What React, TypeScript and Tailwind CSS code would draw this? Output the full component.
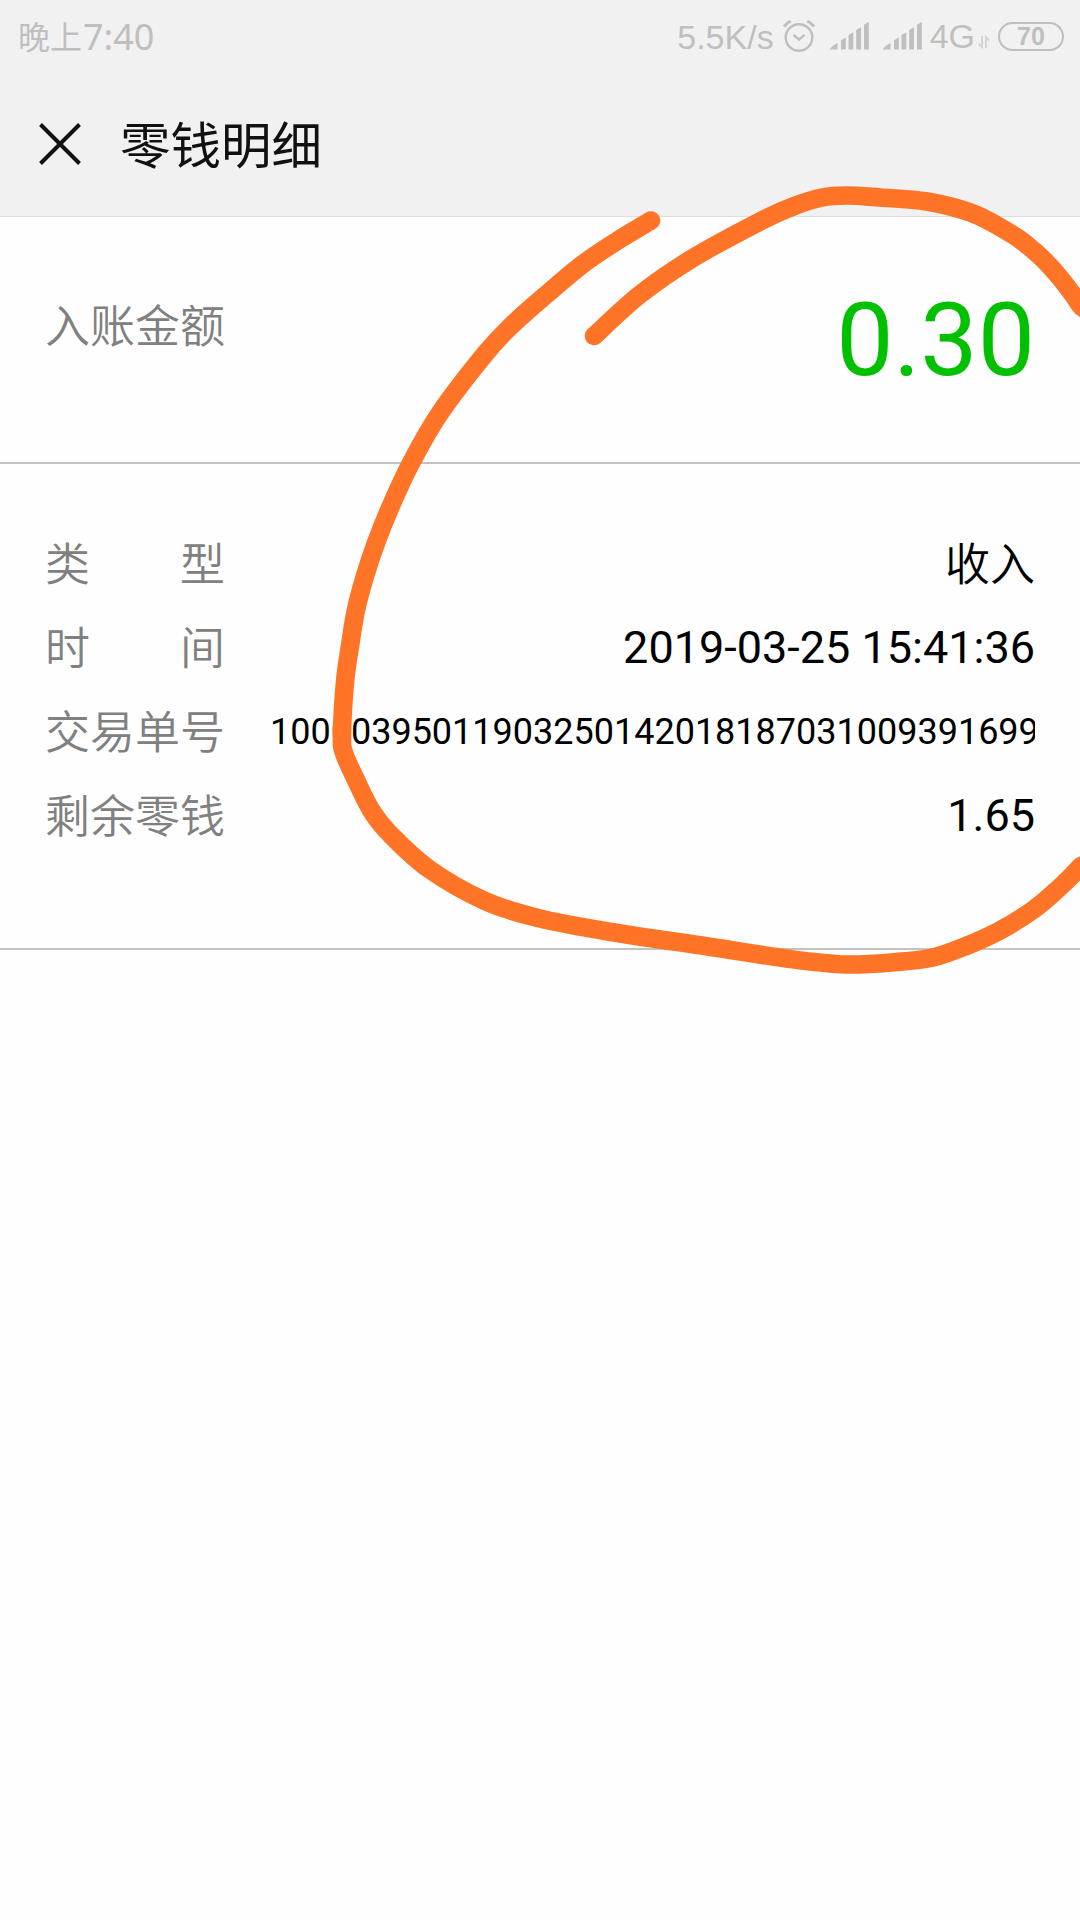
const details = [
  { label: ["类", "型"], value: "收入" },
  { label: ["时", "间"], value: "2019-03-25 15:41:36" },
  { label: ["交", "易", "单", "号"], value: "10000395011903250142018187031009391699", small: true },
  { label: ["剩", "余", "零", "钱"], value: "1.65" },
];

const strokePoints = [
  [594, 336], [640, 294.5], [693, 258], [760, 221.5], [793, 206.5], [822, 197.5], [847, 195.5], [880, 197.5],
  [927, 201.5], [973, 213.5], [1010, 233], [1027, 245], [1044, 260], [1061, 279], [1080, 305], [1100, 340],
  [1140, 560], [1108, 834], [1080, 867], [1058, 889], [1033, 910], [999, 931], [965, 946.5], [933, 957.5],
  [897, 962], [846, 964.5], [790, 959], [708, 946.5], [611, 932], [538, 918], [485, 901], [429, 869],
  [389, 833], [371, 810], [356, 780], [344, 753], [342, 735], [345, 682], [350, 646], [356, 610],
  [365, 576], [376, 543], [390, 508], [411, 463], [440, 413], [485, 354], [512, 325], [547, 294],
  [583, 264], [617, 241], [651, 220.5],
];

// Catmull-Rom spline through the points, written as cubic beziers
function smoothPath(pts: number[][]) {
  let d = `M${pts[0][0]} ${pts[0][1]}`;
  for (let i = 0; i < pts.length - 1; i++) {
    const p0 = pts[i - 1] ?? pts[i];
    const p1 = pts[i];
    const p2 = pts[i + 1];
    const p3 = pts[i + 2] ?? p2;
    d += `C${p1[0] + (p2[0] - p0[0]) / 6} ${p1[1] + (p2[1] - p0[1]) / 6} ${p2[0] - (p3[0] - p1[0]) / 6} ${p2[1] - (p3[1] - p1[1]) / 6} ${p2[0]} ${p2[1]}`;
  }
  return d;
}

function AlarmIcon() {
  return (
    <svg width="34" height="34" viewBox="0 0 34 34" fill="none" stroke="currentColor" strokeWidth="2.4" strokeLinecap="round">
      <circle cx="17" cy="18.5" r="13.3" />
      <path d="M2 7.6Q4.7 3.8 8.8 2M32 7.6Q29.3 3.8 25.2 2" strokeWidth="3" strokeLinecap="butt" />
      <path d="M12.2 16.4L17 20.6L22 16.4" />
    </svg>
  );
}

function SignalIcon() {
  return (
    <svg width="40" height="28" viewBox="0 0 40 28" fill="currentColor">
      <path d="M0 27.5Q0 25 7.5 21V27.5ZM11 18.2L15.8 15.5V27.5H11ZM18.5 13L23.3 10.3V27.5H18.5ZM26.2 8L31 5.2V27.5H26.2ZM34 2.7L38.8 0V27.5H34Z" />
    </svg>
  );
}

function StatusBar() {
  return (
    <div className="flex h-[72px] items-center justify-between pl-[18px] pr-4 text-[#bfbfbf]">
      <div className="flex items-center pt-px leading-none">
        <span className="mb-[3px] font-['Noto_Sans_CJK_SC',sans-serif] text-[32px]">晚上</span>
        <span className="ml-px font-['Noto_Sans',sans-serif] text-[36px]">7:40</span>
      </div>
      <div className="flex items-center font-['Liberation_Sans',sans-serif] text-[34px] leading-none">
        <span className="mr-[8px] mt-px">5.5K/s</span>
        <AlarmIcon />
        <span className="ml-[14px] mr-[13px]"><SignalIcon /></span>
        <SignalIcon />
        <span className="ml-[7px]">4G</span>
        <svg className="ml-[3px] mr-[8px] mt-[12px]" width="12" height="14" viewBox="0 0 12 14" fill="none" stroke="#d2d2d2" strokeWidth="1.8">
          <path d="M4 1V12L0.8 8.5M8 13V2L11.2 5.5" />
        </svg>
        <div className="flex h-[29px] w-[66px] items-center justify-center rounded-full border-[2.5px] border-[#bfbfbf] text-[25px] font-bold">
          70
        </div>
      </div>
    </div>
  );
}

export default function App() {
  return (
    <div className="relative h-[1920px] w-[1080px] overflow-hidden bg-[#fefefe] font-[Roboto,'Noto_Sans_CJK_SC',sans-serif] text-black">
      <header className="h-[217px] border-b border-[#dedede] bg-[#f1f1f1]">
        <StatusBar />
        <div className="flex h-[144px] items-center pl-[39px]">
          <svg width="42" height="42" viewBox="0 0 42 42" stroke="#111" strokeWidth="4">
            <path d="M1.5 1.5L40.5 40.5M40.5 1.5L1.5 40.5" />
          </svg>
          <h1 className="mb-[3px] ml-[39px] font-['Noto_Sans_CJK_SC',sans-serif] text-[50.5px] leading-none text-[#111]">零钱明细</h1>
        </div>
      </header>

      <section className="flex h-[247px] items-start justify-between border-b-2 border-[#c3c3bf] pl-[45px] pr-[45px]">
        <span className="mt-[84px] font-['Noto_Sans_CJK_SC',sans-serif] text-[45px] font-[350] leading-none text-[#808080]">
          入账金额
        </span>
        <span className="mt-[72px] text-[102px] leading-none text-[#00c000]">0.30</span>
      </section>

      <section className="h-[486px] border-b-2 border-[#c3c3bf] pl-[45px] pr-[45px] pt-[57px]">
        {details.map((row) => (
          <div key={row.label[0]} className="flex h-[84px] items-center justify-between">
            <div className="mb-[4px] flex w-[180px] justify-between font-['Noto_Sans_CJK_SC',sans-serif] text-[45px] font-[350] leading-none text-[#808080]">
              {row.label.map((char) => (
                <span key={char}>{char}</span>
              ))}
            </div>
            {row.small ? (
              <span className="mt-[2px] w-[765px] overflow-hidden whitespace-nowrap text-[36px] leading-none">{row.value}</span>
            ) : row.value === "收入" ? (
              <span className="mb-[4px] font-['Noto_Sans_CJK_SC',sans-serif] text-[45px] font-[350] leading-none">{row.value}</span>
            ) : (
              <span className="text-[45px] leading-none">{row.value}</span>
            )}
          </div>
        ))}
      </section>

      {/* Hand-drawn marker circle */}
      <svg className="absolute left-0 top-0" width="1080" height="1920" viewBox="0 0 1080 1920" fill="none">
        <path d={smoothPath(strokePoints)} stroke="#ff7426" strokeWidth="18.6" strokeLinecap="round" strokeLinejoin="round" />
      </svg>
    </div>
  );
}
